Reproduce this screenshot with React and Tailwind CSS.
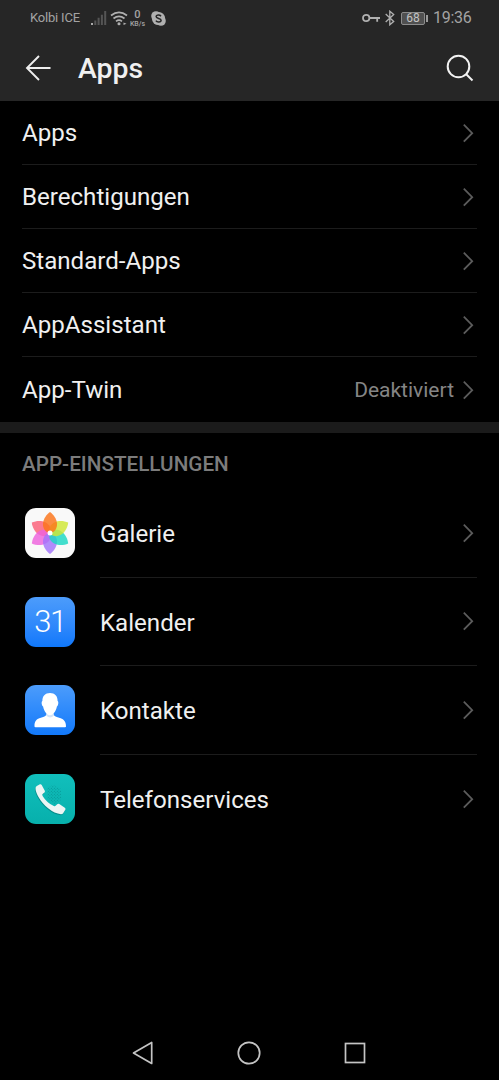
import React from "react";

const settings = [
  { name: "Apps" },
  { name: "Berechtigungen" },
  { name: "Standard-Apps" },
  { name: "AppAssistant" },
  { name: "App-Twin", value: "Deaktiviert" },
];

const petals = [
  { angle: 300, color: "#fb5f78" },
  { angle: 240, color: "#ee62dd" },
  { angle: 180, color: "#a273fb" },
  { angle: 120, color: "#1bd8c3" },
  { angle: 60, color: "#cfe634" },
  { angle: 0, color: "#fb7419" },
];

const Chevron = () => (
  <svg width="12" height="20" viewBox="0 0 12 20" fill="none" stroke="#5c5c5c" strokeWidth="1.8" className="shrink-0">
    <path d="M1.800 1.700 10.200 10.200 1.800 18.700" />
  </svg>
);

const GalleryIcon = () => (
  <svg width="50" height="50" viewBox="0 0 50 50">
    <rect width="50" height="50" rx="11" fill="#f9f9f9" />
    {petals.map((p) => (
      <path
        key={p.angle}
        d="M25 25C20 24.500 17.700 20 18 15.500C18.300 11 21.500 6.500 25 4C28.500 6.500 31.700 11 32 15.500C32.300 20 30 24.500 25 25Z"
        fill={p.color}
        fillOpacity="0.82"
        transform={`rotate(${p.angle} 25 25)`}
      />
    ))}
    <circle cx="25" cy="25" r="2.500" fill="#fff" />
  </svg>
);

const CalendarIcon = () => (
  <div className="flex size-[50px] items-center justify-center rounded-[11px] bg-linear-to-b from-[#4c9cfb] to-[#0f78fb] text-[31px] leading-none font-light tracking-[-1.5px] text-white">
    31
  </div>
);

const ContactsIcon = () => (
  <svg width="50" height="50" viewBox="0 0 50 50">
    <defs>
      <linearGradient id="contacts-bg" x1="0" y1="0" x2="0" y2="1">
        <stop stopColor="#4c9cfb" />
        <stop offset="1" stopColor="#1279fb" />
      </linearGradient>
    </defs>
    <rect width="50" height="50" rx="11" fill="url(#contacts-bg)" />
    <path
      d="M9.500 41.500C9.300 36 11.500 34.300 15 33C18.500 31.700 21.200 31.300 21.500 29.500H28.500C28.800 31.300 31.500 31.700 35 33C38.500 34.300 41 36 41 41.500Q41 42.200 40 42.200H10.500Q9.500 42.200 9.500 41.500Z"
      fill="#fff"
    />
    <path d="M21.300 28.500h7.500v2.200q-3.750 3.600-7.500 0z" fill="#d5e5f8" />
    <path
      d="M25 8C29.800 8 32.700 11 32.600 16C33.700 16.200 33.600 20.500 31.900 21.500C31 26 28.300 30.200 25 30.200S19 26 18.100 21.500C16.400 20.500 16.300 16.200 17.400 16C17.300 11 20.200 8 25 8Z"
      fill="#fff"
    />
  </svg>
);

const handset =
  "M11.500 11.300L14.600 9.500Q15.700 9 16.400 10.200L19.500 16Q20 17.200 19 18L17.300 19.300Q16.700 20 17.300 21.200Q21.500 28 28.500 31.300Q29.600 31.800 30.300 31L31.900 29.500Q32.900 28.700 34 29.300L39.500 33Q40.700 33.900 40 35L38 38.200Q37.300 39.400 35.700 39.400Q29.500 39 22.500 33.300C15.500 27.500 10.500 19 10.200 14Q10.100 12.100 11.500 11.300Z";

const PhoneIcon = () => (
  <svg width="50" height="50" viewBox="0 0 50 50">
    <defs>
      <linearGradient id="phone-bg" x1="0" y1="0" x2="0" y2="1">
        <stop stopColor="#11bfbc" />
        <stop offset="1" stopColor="#07b0ac" />
      </linearGradient>
      <pattern id="phone-dots" width="3" height="3" patternUnits="userSpaceOnUse">
        <circle cx="0.800" cy="0.800" r="0.500" fill="#058d8d" />
        <circle cx="2.300" cy="2.300" r="0.500" fill="#058d8d" />
      </pattern>
    </defs>
    <rect width="50" height="50" rx="11" fill="url(#phone-bg)" />
    <path d="M22 14 28 11 36 15V26L30 30 22 25Z" fill="url(#phone-dots)" />
    <path d={handset} fill="#078e8c" transform="translate(-0.2 1.800)" />
    <path d={handset} fill="#edf5f4" transform="translate(0.3 0.800)" />
  </svg>
);

const apps = [
  { name: "Galerie", Icon: GalleryIcon },
  { name: "Kalender", Icon: CalendarIcon },
  { name: "Kontakte", Icon: ContactsIcon },
  { name: "Telefonservices", Icon: PhoneIcon },
];

const StatusBar = () => (
  <div className="flex h-9 items-center pr-[27px] pl-[30px] text-[#a3a3a3]">
    <span className="w-[61px] text-[13px] tracking-[-0.2px] whitespace-nowrap">Kolbi ICE</span>
    <svg width="16" height="15" viewBox="0 0 16 15" fill="#555">
      <path d="M0 12h2v2H0z" fill="#aaa" />
      <path d="M3.300 9.500h2V14h-2zM6.600 6.800h2V14h-2zM9.900 3.700h2V14h-2zM13.200 0h2v14h-2z" />
    </svg>
    <svg width="18" height="15" viewBox="0 0 18 15" fill="none" stroke="#b0b0b0" strokeWidth="1.700" className="ml-[3px]">
      <path d="M1 4.500Q9-1.800 17 4.500M3.500 7.500Q9 3.200 14.500 7.500M6 10.300Q9 8 12 10.300" />
      <circle cx="9" cy="12.800" r="0.700" fill="#b0b0b0" />
      <path d="m13.500 11.500 3 1.300-3 1.300z" fill="#b0b0b0" stroke="none" />
    </svg>
    <span className="ml-[1px] flex w-[17px] flex-col items-center font-medium">
      <span className="text-[11px] leading-[11px]">0</span>
      <span className="text-[7px] leading-[8px]">KB/s</span>
    </span>
    <svg width="15" height="15" viewBox="0 0 15 15" className="ml-[5px]">
      <circle cx="7.500" cy="7.500" r="6.600" fill="#b0b0b0" />
      <circle cx="5" cy="5" r="4.800" fill="#b0b0b0" />
      <circle cx="10" cy="10" r="4.800" fill="#b0b0b0" />
      <path d="M10 5.200C8.800 3.600 5.100 3.700 5.100 5.600C5.100 8 10.100 6.900 10.100 9.300C10.100 11.400 6 11.500 4.900 9.700" fill="none" stroke="#262626" strokeWidth="1.500" />
    </svg>
    <svg width="19" height="10" viewBox="0 0 19 10" fill="none" stroke="#b0b0b0" strokeWidth="1.800" className="ml-auto">
      <circle cx="4.200" cy="5" r="3.200" />
      <path d="M7.400 5H18M15.200 5v3.700" />
    </svg>
    <svg width="10" height="16" viewBox="0 0 10 16" fill="none" stroke="#b0b0b0" strokeWidth="1.300" className="ml-1">
      <path d="m0.700 4 8 7.500-3.900 3.300V1.200l3.900 3.300-8 7.500" />
    </svg>
    <div className="ml-1.5 flex items-center gap-px">
      <span className="flex h-[13px] w-6 items-center justify-center rounded-[2px] border border-[#8c8c8c] bg-[#505050] text-xs leading-none text-[#c4c4c4]">
        68
      </span>
      <span className="h-[7px] w-0.5 bg-[#999]" />
    </div>
    <span className="ml-[5px] w-[39px] text-base tracking-[-0.3px] whitespace-nowrap">19:36</span>
  </div>
);

const App = () => {
  return (
    <div className="flex h-[1080px] w-[499px] flex-col overflow-hidden bg-black font-[Roboto,sans-serif] text-[#f0f0f0]">
      <header className="h-[101px] bg-[#262626]">
        <StatusBar />
        <div className="flex h-16 items-center pr-[25px] pl-[25px]">
          <svg width="27" height="26" viewBox="0 0 27 26" fill="none" stroke="#eee" strokeWidth="1.900">
            <path d="M25.500 13H1.700M14 1 2 13l12 12" />
          </svg>
          <h1 className="ml-[26px] pt-0.5 text-[28.400px] leading-8 font-medium">Apps</h1>
          <svg width="28" height="28" viewBox="0 0 28 28" fill="none" stroke="#f2f2f2" strokeWidth="2" className="ml-auto">
            <circle cx="12.500" cy="12.500" r="10.800" />
            <path d="m20 20 6.500 6.500" />
          </svg>
        </div>
      </header>

      <div className="border-b-[11px] border-[#1b1b1b]">
        {settings.map((item) => (
          <div key={item.name} className="mx-[22px] flex h-16 items-center border-b border-[#1c1c1c] pr-[3px] last:h-[65px] last:border-0">
            <span className="pt-0.5 text-[24.100px]">{item.name}</span>
            <span className="ml-auto pt-0.5 pr-2 text-[21px] text-[#858585]">{item.value}</span>
            <Chevron />
          </div>
        ))}
      </div>

      <h2 className="flex h-[56px] items-center pt-2 pl-[22px] text-[20.700px] font-medium text-[#7c7c7c]">
        APP-EINSTELLUNGEN
      </h2>
      <div className="flex flex-col">
        {apps.map(({ name, Icon }) => (
          <div key={name} className="group flex h-[88.500px] items-center pr-[22px] pl-[25px]">
            <Icon />
            <div className="ml-[25px] flex h-full flex-1 items-center justify-between border-b border-[#1c1c1c] pr-[3px] group-last:border-0">
              <span className="pt-[3px] text-[24.100px]">{name}</span>
              <Chevron />
            </div>
          </div>
        ))}
      </div>

      <nav className="mt-auto flex h-[55px] items-center justify-between pr-[133px] pl-[132px]">
        <svg width="22" height="24" viewBox="0 0 22 24" fill="none" stroke="#c4c4c4" strokeWidth="1.700" strokeLinejoin="round">
          <path d="M19.700 1.500v21L1.500 12z" />
        </svg>
        <svg width="24" height="24" viewBox="0 0 24 24" fill="none" stroke="#c4c4c4" strokeWidth="1.700">
          <circle cx="12" cy="12" r="10.700" />
        </svg>
        <svg width="22" height="22" viewBox="0 0 22 22" fill="none" stroke="#c4c4c4" strokeWidth="1.700">
          <rect x="1.500" y="1.500" width="19" height="19" />
        </svg>
      </nav>
    </div>
  );
};

export default App;
